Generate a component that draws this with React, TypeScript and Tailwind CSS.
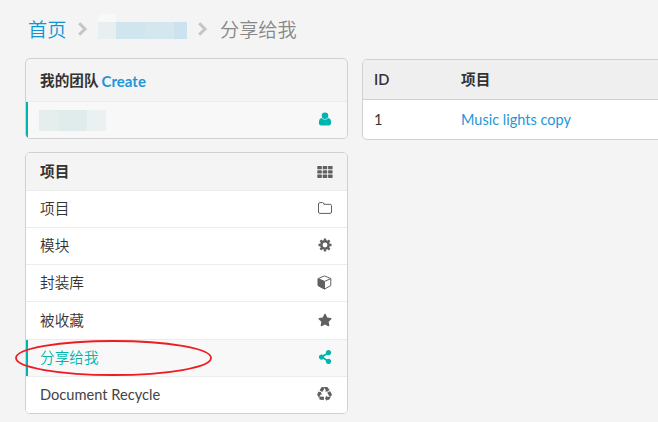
import type { ReactNode } from 'react';
import { FaShareAlt, FaStar } from 'react-icons/fa';

function Chevron() {
  return (
    <svg className="h-4 w-[10px] shrink-0" viewBox="0 0 10 16" fill="none" stroke="#c5c5c5" strokeWidth="3">
      <path d="M1.2 2.2 7 8 1.2 13.8" />
    </svg>
  );
}

function UserIcon() {
  return (
    <svg className="h-[14px] w-[14px]" viewBox="0 0 14 14" fill="currentColor">
      <circle cx="7" cy="3.7" r="3.3" />
      <path d="M3.7 5.9C1.6 6.2.9 8.2.9 10.8.9 12.6 1.8 13.5 3.3 13.5h7.4c1.5 0 2.4-.9 2.4-2.7 0-2.6-.7-4.6-2.8-4.9C9.4 7 8.3 7.5 7 7.5S4.6 7 3.7 5.9Z" />
    </svg>
  );
}

function GridIcon() {
  return (
    <svg className="h-3 w-4" viewBox="0 0 16 12" fill="currentColor">
      {[0, 4.3, 8.6].map((y) =>
        [0.3, 5.7, 11.1].map((x) => <rect key={`${x}-${y}`} x={x} y={y} width="4.5" height="3.3" rx="0.6" />),
      )}
    </svg>
  );
}

function FolderIcon() {
  return (
    <svg className="h-[14px] w-[14px]" viewBox="0 0 14 14" fill="none" stroke="currentColor">
      <path d="M.5 3c0-.8.5-1.4 1.4-1.4h2.7c.8 0 1.3.5 1.3 1.4v.3h6.2c.9 0 1.4.6 1.4 1.4v6.3c0 .8-.5 1.4-1.4 1.4H1.9c-.9 0-1.4-.6-1.4-1.4Z" />
    </svg>
  );
}

function GearIcon() {
  return (
    <svg className="h-[14px] w-[14px]" viewBox="0 0 14 14">
      <g fill="none" stroke="currentColor">
        <circle cx="7" cy="7" r="3.7" strokeWidth="2.5" />
        <path d="M7 .5v2M7 11.5v2M.5 7h2M11.5 7h2M2.4 2.4l1.5 1.5M10.1 10.1l1.5 1.5M2.4 11.6l1.5-1.5M10.1 3.9l1.5-1.5" strokeWidth="2.4" />
      </g>
    </svg>
  );
}

function CubeIcon() {
  return (
    <svg className="h-[15px] w-[15px]" viewBox="0 0 15 15" stroke="currentColor" strokeLinejoin="round">
      <path d="M7.5.9 13.8 3.6v7L7.5 14 1.2 10.6v-7Z" fill="none" />
      <path d="M1.2 3.6 7.5 6.4V14L1.2 10.6Z" fill="currentColor" />
      <path d="M7.5 6.4 13.8 3.6" fill="none" />
    </svg>
  );
}

function RecycleIcon() {
  return (
    <svg className="h-[15px] w-[15px]" viewBox="0 0 1792 1792" fill="currentColor">
      <path d="M836 1169l-15 368-2 22-420-29q-36-3-67-31.5t-47-65.5q-11-27-14.5-55t4-65 12-55 21.5-64 19-53q78 12 509 28zm-387-586l180 379-147-92q-63 72-111.5 144.5t-72.5 125-39.5 94.5-18.5 63l-4 21-190-357q-17-26-18-56t6-47l8-18q35-63 114-188l-140-86zm1231 517l-188 359q-12 29-36.5 46.5t-43.5 20.5l-18 4q-71 7-219 12l8 164-230-367 211-362 7 173q170 16 283 5t170-33zm-785-924q-47 63-265 435l-317-187-19-12 225-356q20-31 60-45t80-10q24 2 48.5 12t42 21 41.5 33 36 34.5 36 39.5 32 35zm655 307l212 363q18 37 12.5 76t-27.5 74q-13 20-33 37t-38 28-48.5 22-47 16-51.5 14-46 12q-34-72-265-436l313-195zm-143-226l142-83-220 373-419-20 151-86q-34-89-75-166t-75.5-123.5-64.5-80-47-46.5l-17-13 405 1q31-3 58 10.5t39 28.5l11 15q39 61 112 190z" />
    </svg>
  );
}

function Row({ label, icon, active, height = 'h-[37px]' }: { label: ReactNode; icon: ReactNode; active?: boolean; height?: string }) {
  return (
    <div
      className={`flex items-center justify-between border-t border-[#ececec] pb-[2px] pl-[14px] pr-[15px] font-['Lato','Noto_Sans_CJK_SC_DemiLight','Noto_Sans_CJK_SC',sans-serif] font-[350] ${height} ${
        active ? 'bg-[#f8f8f8] text-[#00b5ad] shadow-[inset_2px_0_0_#00b5ad]' : 'bg-white'
      }`}
    >
      <span className="pt-[2px]">{label}</span>
      <span className={active ? 'text-[#00b5ad]' : 'text-[#606060]'}>{icon}</span>
    </div>
  );
}

export default function App() {
  return (
    <div className="h-[422px] w-[658px] overflow-hidden bg-[#f4f4f4] font-['Lato','Noto_Sans_CJK_SC',sans-serif] text-[14.65px] leading-5 text-[#333]">
      <nav className="flex h-[58px] items-center pl-7 text-[19.2px] leading-6">
        <a className="w-[50px] font-['Noto_Sans_CJK_SC_DemiLight','Noto_Sans_CJK_SC',sans-serif] font-[350] text-[#0d96d5]">首页</a>
        <Chevron />
        <span className="-mt-[5px] ml-[10px] flex h-[25px] w-[89px] items-end">
          <span className="h-full w-[18px] border-t-8 border-[#f8f8f8] bg-[#e8eff0]" />
          <span className="h-[17px] w-[29px] bg-[#d1e5ef]" />
          <span className="h-[17px] w-[29px] bg-[#d4e7ef]" />
          <span className="h-[17px] w-[13px] bg-[#cce2ee]" />
        </span>
        <span className="ml-[11px] flex"><Chevron /></span>
        <span className="ml-[12px] font-['Noto_Sans_CJK_SC_DemiLight','Noto_Sans_CJK_SC',sans-serif] font-[350] text-[#888]">分享给我</span>
      </nav>

      <div className="flex items-start gap-[14px] pl-[25px]">
        <aside className="relative flex w-[323px] shrink-0 flex-col gap-[13px]">
          <section className="h-[81px] overflow-hidden rounded-[5px] border border-[#d0d0d0]">
            <header className="flex h-[42px] items-center gap-[3px] pl-[14px] pt-px">
              <b>我的团队</b>
              <a className="text-[15px] font-bold text-[#2196d9]">Create</a>
            </header>
            <Row
              active
              icon={<UserIcon />}
              label={
                <span className="-ml-px flex h-[21px] w-[68px]">
                  <span className="w-[19px] bg-[#e5eeed]" />
                  <span className="w-[29px] bg-[#dfeceb]" />
                  <span className="w-[19px] bg-[#ebf1f0]" />
                </span>
              }
            />
          </section>

          <section className="h-[262px] overflow-hidden rounded-[5px] border border-[#d0d0d0] bg-white">
            <header className="flex h-[37px] items-center justify-between bg-[#f4f4f4] pl-[14px] pr-[14px]">
              <b>项目</b>
              <span className="text-[#606060]"><GridIcon /></span>
            </header>
            <Row label="项目" icon={<FolderIcon />} />
            <Row label="模块" icon={<GearIcon />} />
            <Row label="封装库" icon={<CubeIcon />} />
            <Row label="被收藏" icon={<FaStar className="h-[14px] w-[14px]" />} height="h-[38px]" />
            <Row active label="分享给我" icon={<FaShareAlt className="h-[14px] w-[14px]" />} />
            <Row label={<span className="font-normal text-[#444]">Document Recycle</span>} icon={<RecycleIcon />} />
          </section>

          <svg className="pointer-events-none absolute -left-[11px] top-[281px] h-[38px] w-[200px]" viewBox="0 0 200 38" fill="none">
            <ellipse cx="99.5" cy="19" rx="97.5" ry="17" stroke="#ed1c24" strokeWidth="1.8" />
          </svg>
        </aside>

        <div className="mt-px h-[81px] w-[310px] shrink-0 overflow-hidden rounded-[5px] border border-[#d0d0d0] bg-white">
          <div className="flex h-10 items-center border-b border-[#d0d0d0] bg-[#efefef] pl-[11px]">
            <span className="w-[87px] font-semibold">ID</span>
            <span className="font-bold">项目</span>
          </div>
          <div className="flex h-[39px] items-center pl-[11px]">
            <span className="w-[87px]">1</span>
            <a className="text-[14.5px] text-[#1f96d8]">Music lights copy</a>
          </div>
        </div>
      </div>
    </div>
  );
}
